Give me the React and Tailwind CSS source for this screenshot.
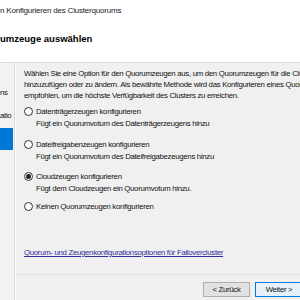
export default function App() {
  const options = [
    {
      label: 'Datenträgerzeugen konfigurieren',
      desc: 'Fügt ein Quorumvotum des Datenträgerzeugens hinzu',
      checked: false,
      mt: 'mt-[5px]',
    },
    {
      label: 'Dateifreigabenzeugen konfigurieren',
      desc: 'Fügt ein Quorumvotum des Dateifreigabezeugens hinzu',
      checked: false,
      mt: 'mt-[10px]',
    },
    {
      label: 'Cloudzeugen konfigurieren',
      desc: 'Fügt dem Cloudzeugen ein Quorumvotum hinzu.',
      checked: true,
      mt: 'mt-[9px]',
    },
    {
      label: 'Keinen Quorumzeugen konfigurieren',
      desc: null,
      checked: false,
      mt: 'mt-[7px]',
    },
  ];

  return (
    <div className="relative flex h-[300px] w-[300px] flex-col overflow-hidden bg-[#f0f0f0] font-['Liberation_Sans',Arial,sans-serif] text-[7.8px] tracking-[-0.3px] text-[#111]">
      {/* header */}
      <div className="h-[63px] shrink-0 border-b border-[#dadada] bg-white">
        <div className="mt-[5px] h-[11px] whitespace-nowrap text-[8px] leading-[11px] tracking-[-0.2px] text-[#1a1a1a]">
          n Konfigurieren des Clusterquorums
        </div>
        <div className="mt-[16px] h-[13px] whitespace-nowrap text-[9.5px] font-bold leading-[13px] tracking-normal text-black">
          umzeuge auswählen
        </div>
      </div>

      <div className="flex min-h-0 flex-1">
        {/* left nav */}
        <div className="w-[15px] shrink-0 overflow-hidden border-r border-[#dcdcdc] bg-[#f2f2f2]">
          <div className="mt-[24px] h-[11px] whitespace-nowrap leading-[11px]">ns</div>
          <div className="mt-[12px] h-[11px] whitespace-nowrap leading-[11px]">atio</div>
          <div className="mt-[7px] h-[22px] w-[13px] bg-[#0078d7]" />
        </div>

        {/* content */}
        <div className="flex min-w-0 flex-1 flex-col border-l border-white">
          <div className="flex-1 overflow-hidden pl-[8px] pt-[5px]">
            <div className="h-[11px] overflow-hidden whitespace-nowrap leading-[11px]">
              Wählen Sie eine Option für den Quorumzeugen aus, um den Quorumzeugen für die Cluster
            </div>
            <div className="h-[11px] overflow-hidden whitespace-nowrap leading-[11px]">
              hinzuzufügen oder zu ändern. Als bewährte Methode wird das Konfigurieren eines Quorumzeugen
            </div>
            <div className="h-[11px] whitespace-nowrap leading-[11px]">
              empfohlen, um die höchste Verfügbarkeit des Clusters zu erreichen.
            </div>

            {options.map((o) => (
              <div key={o.label} className={o.mt}>
                <div className="flex h-[11px] items-center gap-[3px] whitespace-nowrap leading-[11px]">
                  <span className="flex h-[9px] w-[9px] shrink-0 items-center justify-center rounded-full border border-[#333] bg-white">
                    {o.checked && <span className="h-[5px] w-[5px] rounded-full bg-[#222]" />}
                  </span>
                  <span>{o.label}</span>
                </div>
                {o.desc && (
                  <div className="mt-[1px] h-[11px] whitespace-nowrap pl-[12px] leading-[11px]">
                    {o.desc}
                  </div>
                )}
              </div>
            ))}

            <div className="mt-[35px] h-[11px] whitespace-nowrap leading-[11px] text-[#2f2fa0] underline">
              Quorum- und Zeugenkonfigurationsoptionen für Failovercluster
            </div>
          </div>

          {/* footer */}
          <div className="flex h-[26px] shrink-0 items-start justify-end gap-[5px] border-t border-[#dfdfdf] pt-[7px]">
            <button className="h-[15px] w-[47px] shrink-0 border border-[#adadad] bg-[#e1e1e1] text-[7.8px] leading-[13px] text-[#111]">
              &lt; Zurück
            </button>
            <button className="-mr-[3px] h-[15px] w-[48px] shrink-0 border border-[#0078d7] bg-[#e5f1fb] text-[7.8px] leading-[13px] text-[#111]">
              Weiter &gt;
            </button>
          </div>
        </div>
      </div>
    </div>
  );
}
